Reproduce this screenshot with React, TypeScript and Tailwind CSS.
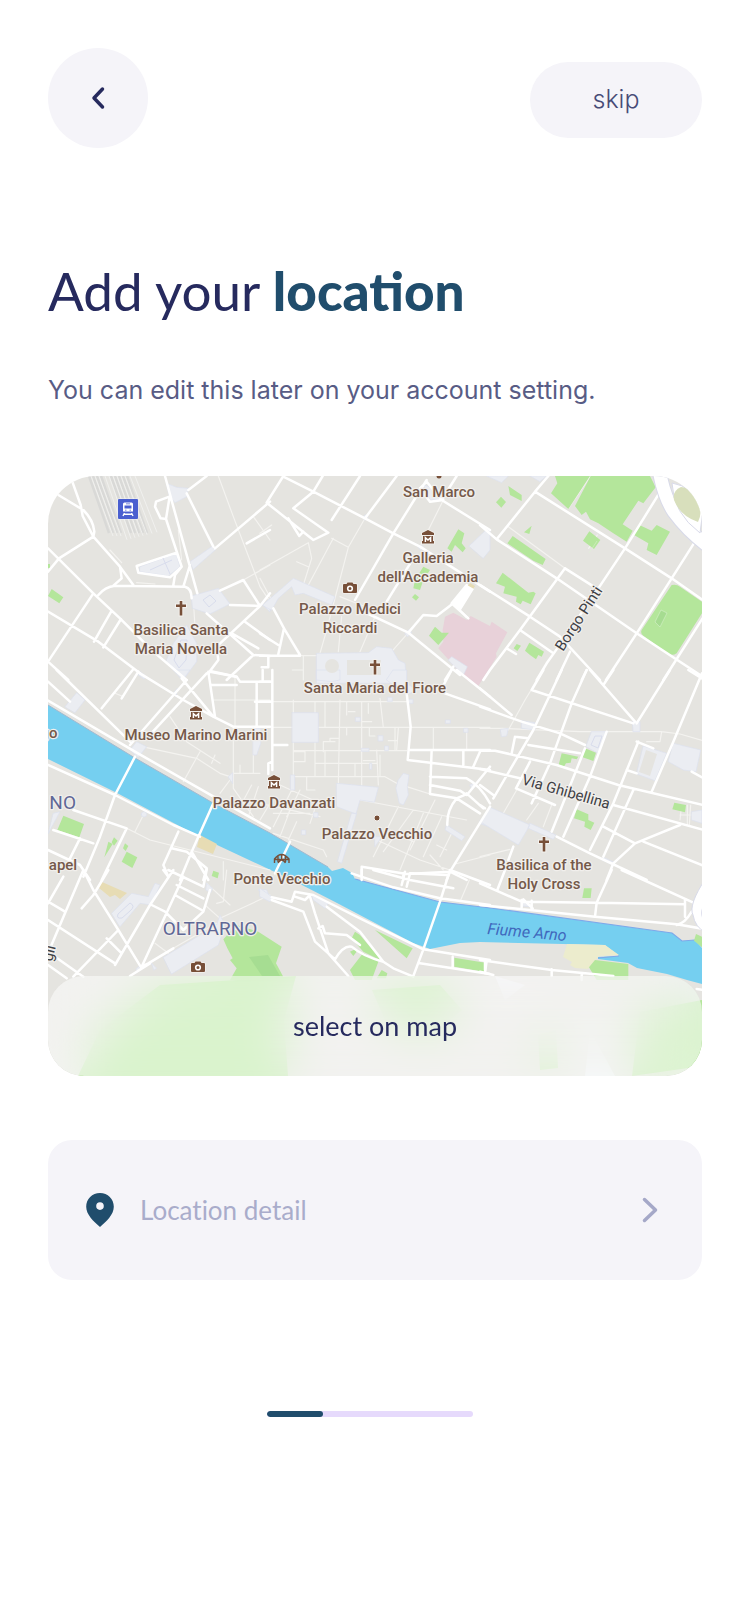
type Tile = {
  x: number;
  y: number;
  plazas: string;
  parks: string;
  major: string;
  minor: string;
};

/* Each tile is drawn on its own grid at three units per map pixel. */
const tiles: Tile[] = [
  {
    x: 40,
    y: 470,
    plazas:
      "M380 40L410 52L445 55L440 80L405 98L388 78ZM450 275L515 230L528 238L460 298ZM455 378L535 355L570 402L510 432L458 415ZM400 520L440 465L470 520L470 575L430 628L378 575ZM300 290L408 250L420 290L385 318L300 305ZM670 405L690 385V425Z",
    parks: "M35 357L70 382L58 400L24 378ZM24 282h6v12h-6Z",
    major:
      "M98 38L122 105L128 138L160 200L240 290L280 345M55 75L130 120Q160 150 163 185L160 200L57 265L24 305M24 235L160 370L240 445L340 545L440 630M24 425L175 515L300 610M160 370L24 575L85 630M175 375Q195 350 225 347L435 350Q455 355 455 385M240 290L245 325L220 347M215 422L162 515M243 447L190 532M375 18L400 110L472 370M445 60L500 18M440 70L520 230M525 235L690 95M388 80L348 95L345 110L362 145L378 147L388 85M378 147L425 290L405 315L400 345M450 285L430 350M290 288L410 248L425 290L390 322L295 308ZM540 362L610 330L660 408L570 405M660 408L690 370M660 408L530 530L535 570L505 610M500 430L640 555L690 558M640 555L560 630M615 455L690 510M575 490L655 535M510 603L590 620M620 220L690 180",
    minor:
      "M535 18L580 140L660 350L690 395M640 140L690 210M610 330L690 285M460 390L465 470M210 240L245 278M415 180L425 270M290 338L345 342",
  },
  {
    x: 260,
    y: 470,
    plazas:
      "M8 405L100 325L225 380L215 405L130 370L105 375L95 350L55 385L35 420ZM170 550L325 548L350 530L395 535L415 570L435 580L440 640H170ZM627 228L680 178L690 180V240L670 265ZM565 570L575 560L622 590L610 615ZM435 490L448 478L455 488L443 500ZM490 45L545 60L550 90L510 90ZM308 142l8 -8l8 8l-8 8ZM475 232l8 -8l8 8l-8 8Z",
    parks:
      "M595 178L613 190L605 220L617 235L608 247L585 225L575 245L562 235ZM490 290L510 300L490 330L480 360L460 355L465 330ZM465 372L477 382L468 392L456 382ZM525 470L545 488L567 488L535 525L507 497Z",
    major:
      "M70 18L20 98L160 210L205 188L100 115L160 65L188 18M85 145L118 198L130 185M70 20L160 65L315 145L400 190L480 230L550 275L690 365M300 18L215 150M410 18L315 145M500 30L400 190L285 390M590 18L545 90M460 265L380 395M480 55L500 35L545 90L690 180M480 55L510 95L550 90M300 420L445 488L600 615M445 488L490 435L530 438L580 400M0 490L55 525M40 415L72 475L55 552M72 475L120 555M0 557H120M25 557V592H5M580 590L555 630M575 400L620 345M575 400L625 445",
    minor:
      "M215 205L265 232L200 480L180 550M265 232L315 145M220 205L145 345M0 300L145 218L155 265L130 345M110 275L145 290M0 325L40 400M0 190L35 165M240 380L340 420M120 557H175M345 440L300 545M97 600H130M445 488L395 545M130 557V630M245 440L235 545M550 90L480 230",
  },
  {
    x: 480,
    y: 470,
    plazas: "M20 18L65 38L85 18ZM150 18L180 35L200 18Z",
    parks:
      "M225 18H330L265 117L213 70L232 40ZM332 18H510L527 52L490 100L475 92L428 163L458 182L440 215L400 190L355 160L330 148L318 125L305 135L285 108ZM478 165L515 182L530 165L570 185L530 255L500 240L505 220L462 195ZM85 48L125 75V93L90 75ZM63 80L78 96L64 113L48 97ZM155 167L148 192L132 187ZM98 198L197 267L188 285L160 272L82 220ZM328 184L361 210L342 237L309 212ZM68 308L145 368L160 365L167 370L152 403L128 392L122 403L108 395L110 380L70 370L75 350L48 340ZM575 345Q590 342 600 350L666 395V430L590 550Q575 560 560 548L490 497Q480 490 485 480ZM148 518L192 545L185 560L175 555L168 568L150 555L135 542ZM110 522L123 527L112 543L101 535Z",
    major:
      "M205 18L165 65L50 208M165 65L435 235L575 325L690 405M0 165L50 208L230 325L470 490L680 628M0 345L150 440L240 500L360 630M550 50L435 235L355 355L225 545L200 580L170 630M255 295L120 480L30 600L10 630M255 295L345 352M120 480L220 550M80 535L108 552M645 215L575 325L470 490L378 630M690 410L550 630M270 545L230 630M320 600L305 630",
    minor: "M85 170L255 295M330 20L265 115M326 235L352 195",
  },
  {
    x: 40,
    y: 670,
    plazas:
      "M75 110L110 68L135 90L105 128ZM270 240L290 215L320 230L295 262ZM400 0H450L428 30ZM640 175H662V220L650 255H640ZM565 320L578 308V340ZM300 5L320 20L312 27L295 15ZM40 430L60 425L25 490ZM304 433a8 8 0 1 0 16 0a8 8 0 1 0 -16 0ZM400 70L412 55L408 80Z",
    parks:
      "M70 437L132 462L118 502L52 480ZM205 515L218 522L193 562ZM222 502L233 512L222 527L215 517ZM255 520L265 528L257 543L249 535ZM260 545L292 562L277 594L245 575ZM520 602L537 608L533 625L515 618Z",
    major:
      "M50 0L270 215M24 35L90 95M24 92L285 245L530 385L690 475M278 0L185 115M245 85L295 5M300 10L430 90L520 140L580 170H690M425 25L520 140M440 30L270 225M500 10L320 205M505 5L525 140M510 5L590 20L600 35H690M515 45H590M650 40V170M668 0V30M645 95H690M24 285L225 375L400 465L480 500M285 260L225 375L180 500L130 620M520 400L455 545L420 630M100 420L260 475L185 630M40 480L160 520M120 505L90 565M24 540L120 585L150 630M415 485L370 585L385 620M395 535L440 545L500 595M455 545L505 630M500 595L490 630",
    minor:
      "M320 233L470 265L540 310L570 320M480 245L430 335M390 140L440 215L540 280M525 255L515 280M570 330L540 370M580 170V355L640 440M580 310H660M520 90H690M585 20V170M640 170V310M600 285V310M260 475L330 510L690 600M310 435L285 485M550 575V630M625 440L655 350M225 70L250 80M600 410L635 345M660 450L690 400",
  },
  {
    x: 260,
    y: 670,
    plazas:
      "M97 128H175V217H97ZM230 340L355 352L343 397L300 390L288 432L230 410ZM275 430H290L245 580L233 575ZM415 330L430 310L447 315L442 350L445 375L430 405L418 400L408 355ZM170 0H240V30L215 35L170 30ZM400 0H440V40L470 60L440 75L380 30ZM287 142h14v12h-14ZM355 197h14v16h-14ZM305 235h22v9h-22ZM445 88h14v12h-14ZM375 228h10v14h-10ZM557 150h14v10h-14ZM612 175h12v12h-12ZM125 480h12v14h-12ZM162 428h12v14h-12ZM330 280h5v18h-5ZM92 315h12v45h-12ZM383 82h14v12h-14ZM560 465L615 500L605 512L556 480ZM660 460L690 410V470ZM630 345L645 338L650 345L637 358ZM345 500L365 500L345 530Z",
    parks: "",
    major:
      "M0 35H37M0 95H37M37 0V300M37 275L25 280V312M40 225H82M440 70L452 170L443 270M450 240H690M443 270L690 300M515 240L510 370M510 320L620 325Q660 345 690 400M510 345L600 362L620 375M510 372L590 385L625 370L690 290M610 240V285M660 245L640 290M590 385Q560 420 562 465M590 385L660 430M620 370L670 415M690 410L570 605L560 630M305 590V630M305 590L440 612L570 605L620 630M430 610V630M540 65L575 0M540 65L690 118M590 0L690 80M90 515L45 610",
    minor:
      "M37 172H690M100 90V340M165 95V320M240 90L235 345M305 95V345M37 95H440M100 242H440M100 320H375L410 340M165 280H350M195 95V172M360 85L370 172M260 95V135M265 125H285M325 100V130M305 155H335M405 172V240M415 175L410 240M385 212H410M520 172V240M620 175V240M350 240L355 345M285 280V320M100 245H135V275H100M190 245V215H225M210 215V205H235M328 172V198H345M100 350L40 470M140 320V360H165M60 345L180 400M0 400L180 440M100 395L60 500M170 400L150 460M40 490L190 540L200 560M300 390L620 450M415 410L340 560M490 430L420 600M440 350L510 372M390 480L460 515M330 500L480 570L570 600M585 582L690 555M525 390L450 540M545 440L490 560M575 490L540 560M530 525L560 540M260 172V195M310 272H345M360 255V320M195 245V320M120 360L80 440M40 430H150M110 455L85 510M460 420L370 545M510 555L550 600",
  },
  {
    x: 480,
    y: 670,
    plazas:
      "M30 412L150 465L115 525L0 455ZM150 460L228 495L220 508L145 475ZM125 152L165 158V180L125 175ZM62 178L85 175L80 198L65 200ZM335 185H383L355 250L318 230ZM458 155H480V185H460ZM490 228L560 250L525 332L470 312ZM580 220L662 240L648 305L610 300L565 275ZM635 425L666 420V460L635 450ZM370 562L405 578L400 585L366 570Z",
    parks:
      "M245 250L295 260L290 268L275 265L272 278L258 280L250 293L235 288ZM315 235L348 248L340 273L308 262ZM290 418L325 433V450L343 458L332 480L313 470L315 455L282 445ZM583 398L618 405L615 427L577 418Z",
    major:
      "M190 0L155 60L460 160M245 0L160 180L40 385M320 0L275 100L210 280L155 400M380 185L330 320L250 500M315 235L215 485M475 215L400 400L330 540M570 0L470 160M330 0L465 155M400 0L372 42M666 10L580 215L515 365M460 360L370 560M625 0L666 25M0 55L95 135M0 110L125 155L240 190L315 225M0 242H45L230 285L415 345L690 410M105 200L95 250M105 200L145 205M145 225L300 250M0 297L120 325M150 275L108 355L225 405M0 345L40 375M0 405L15 415M400 405L690 485M370 470L465 520L600 465M465 520L400 580L380 630M490 515L690 595M230 500L330 550L500 630M470 215L520 235M440 300L470 310M635 305L690 335M100 530L85 570",
    minor:
      "M0 175H65L300 185H380L545 185L600 192L690 218M190 0L135 90L85 180M0 560L90 538M110 360L70 430M175 400L140 450M215 405L190 470M545 185L540 215H500M605 405L600 450M622 405V465M632 405L628 465M600 435H640",
  },
  {
    x: 40,
    y: 870,
    plazas:
      "M215 130L275 70L325 80L345 40L360 45L335 105L300 100L240 170ZM370 262L530 165L540 135L555 165L535 225L395 312ZM655 60L690 85L680 60ZM500 40L518 55L512 68L498 60ZM288 297L296 290L303 297L295 305ZM335 280L350 295L342 300Z",
    parks:
      "M550 208L590 165L655 185L725 230L708 280L735 330H570L590 295L570 270L578 265L562 235Z",
    major:
      "M24 95L75 125M70 20L24 100M130 0L45 200L24 250M130 0L160 60L235 180L305 295M24 150L225 280M205 0L160 75L125 115M235 180L100 320M200 205L245 250M400 0L330 105L225 285M430 20L305 290M335 105L375 125L430 180M410 45L490 85M405 75L485 120M490 50L385 0M500 0L490 50M510 60L490 125L430 180M305 290L325 280L400 235M24 245L130 320M24 285L80 325M270 318L330 280M370 0L385 20",
    minor:
      "M345 220L385 250M495 105L540 145L690 75M500 40L570 105M560 0L550 95L530 100M400 235L530 160",
  },
  {
    x: 260,
    y: 870,
    plazas: "M155 75L205 100L195 115L160 90ZM0 55L38 82L30 95L0 80Z",
    parks:
      "M345 180L458 235L440 265ZM285 185L300 195L365 272L310 245L275 205ZM310 248L355 275L335 330H285L270 300ZM270 245L285 238L290 245L280 258ZM583 263L675 278L672 305L583 290ZM365 300L382 310L378 325H350Z",
    major:
      "M35 90L130 125L165 215L205 250L265 318M35 82L95 95L105 65L160 75L300 145L490 238L690 270M105 80L135 90L150 75M200 110L300 185L370 275M150 80L165 130L205 250M175 175L188 168L195 190L260 195L300 225M225 268Q250 225 275 230Q310 260 370 275L400 295L460 320M205 250L225 268M570 0L540 95L490 238L460 318M480 280L690 312M578 260V290M675 270V300M275 10L400 52L540 85L690 105M305 0V20M425 45L435 5M440 50L450 10L560 15M340 0L450 30L580 55M570 0L690 45",
    minor: "M628 30L600 95",
  },
  {
    x: 480,
    y: 870,
    plazas: "M125 95L140 95L150 110L125 108Z",
    parks:
      "M312 55H335L332 84H307ZM345 270L445 282V330H350L327 292ZM648 192L666 200V232L642 212ZM0 278H12V303H0Z",
    major:
      "M0 40L125 95L350 98L615 103M75 0L52 60M395 0L350 98L345 140M425 0L640 98M0 105L345 140L590 163L690 180M125 90V112M130 88L158 115M155 92V117M615 90V140M590 165Q615 160 635 125M0 270L215 300L400 318M20 272L15 310M215 298V318M0 305L40 315M305 310V330M650 357L690 362",
    minor: "",
  },
];

const layers = [
  { key: "minor", fill: "none", stroke: "#f4f3f0", width: 3.5 },
  { key: "plazas", fill: "#ebedf2", stroke: "#dde1ef", width: 2 },
  { key: "parks", fill: "#b4e69b", stroke: "none", width: 0 },
  { key: "major", fill: "none", stroke: "#ffffff", width: 7.5 },
] as const;

const labels: [string, number, number][] = [
  ["San Marco", 439, 497],
  ["Galleria", 428, 563],
  ["dell'Accademia", 428, 582],
  ["Palazzo Medici", 350, 614],
  ["Riccardi", 350, 633],
  ["Basilica Santa", 181, 635],
  ["Maria Novella", 181, 654],
  ["Santa Maria del Fiore", 375, 693],
  ["Museo Marino Marini", 196, 740],
  ["Palazzo Davanzati", 274, 808],
  ["Palazzo Vecchio", 377, 839],
  ["Ponte Vecchio", 282, 884],
  ["Basilica of the", 544, 870],
  ["Holy Cross", 544, 889],
  ["go", 49, 738],
  ["apel", 63, 870],
];

const crosses = [
  [181, 608],
  [375, 667],
  [544, 844],
];
const museums = [
  [428, 537],
  [196, 713],
  [274, 782],
];
const cameras = [
  [350, 588],
  [198, 967],
];

function Pois() {
  return (
    <g>
      {crosses.map(([x, y]) => (
        <path
          key={`${x}-${y}`}
          transform={`translate(${x} ${y})`}
          d="M-1.3 -7H1.3V-3.4H5V-0.9H1.3V7.5H-1.3V-0.9H-5V-3.4H-1.3Z"
          fill="#774f38"
          stroke="#f3f1ee"
          strokeWidth="2"
          paintOrder="stroke"
        />
      ))}
      {museums.map(([x, y]) => (
        <g key={`${x}-${y}`} transform={`translate(${x} ${y})`}>
          <path
            d="M0 -7L6 -4V-2H-6V-4ZM-5 -1H5V4H6V6.500H-6V4H-5Z"
            fill="#774f38"
            stroke="#f3f1ee"
            strokeWidth="1.500"
            paintOrder="stroke"
          />
          <path d="M-2.600 5V0.600L0 3L2.600 0.600V5" fill="none" stroke="#fff" strokeWidth="1.500" />
        </g>
      ))}
      {cameras.map(([x, y]) => (
        <g key={`${x}-${y}`} transform={`translate(${x} ${y})`}>
          <path
            d="M-6 -4H-3.500L-2.500 -5.500H2.500L3.500 -4H6Q7 -4 7 -3V4Q7 5 6 5H-6Q-7 5 -7 4V-3Q-7 -4 -6 -4Z"
            fill="#774f38"
            stroke="#f3f1ee"
            strokeWidth="1.500"
            paintOrder="stroke"
          />
          <circle cy="0.500" r="2.300" fill="none" stroke="#fff" strokeWidth="1.600" />
        </g>
      ))}
      <circle cx="377" cy="818" r="3" fill="#774f38" stroke="#f3f1ee" strokeWidth="1" />
      <path
        d="M274.500 863V859Q281.500 850 289 859V863M278 862V856M281.700 859V855M285.500 862V856M274.500 859.500H289M278 863Q281.700 857 285.500 863"
        fill="none"
        stroke="#774f38"
        strokeWidth="1.400"
      />
      <g transform="translate(118 499)">
        <rect x="-0.500" y="-0.500" width="21" height="21" rx="1.500" fill="#f1f1f5" />
        <rect width="20" height="20" rx="1" fill="#4a5fd0" />
        <path d="M6.500 3.500H13.500Q15 3.500 15 5V12.500H5V5Q5 3.500 6.500 3.500Z" fill="#fff" />
        <path d="M6.500 6.500H13.500V9.500H6.500ZM7 10.700H8.500V11.500H7ZM11.500 10.700H13V11.500H11.500ZM8 4.500H12V5.300H8Z" fill="#4a5fd0" />
        <path d="M6.500 14L5 17M13.500 14L15 17M6 15.300H14" stroke="#fff" strokeWidth="1.400" fill="none" />
      </g>
    </g>
  );
}

function CityMap() {
  return (
    <svg
      viewBox="48 476 654 600"
      preserveAspectRatio="xMidYMid slice"
      className="block h-[600px] w-full font-[Roboto,sans-serif]"
      role="img"
      aria-label="Map of Florence"
    >
      <rect x="48" y="476" width="654" height="600" fill="#e5e4e0" />

      {/* railway yard */}
      <g fill="none" strokeWidth="2.500">
        {[1, 5, 9, 13, 23, 27, 31, 35, 39].map((d) => (
          <path key={d} d={`M${88 + d} 476l20 57`} stroke="#d9d9d7" />
        ))}
        {[3, 7, 11, 17, 21, 25, 29, 33, 37, 42, 47].map((d) => (
          <path key={d} d={`M${88 + d} 476l22 ${d > 12 ? 68 - d / 4 : 60}`} stroke="#f0f0ee" strokeWidth="1" />
        ))}
      </g>

      <path
        transform="translate(260 470) scale(.33333)"
        d="M555 440L580 428L620 450L632 438L690 468L695 455L742 487L708 550L710 560L655 648L620 630L535 535L550 515L548 480Z"
        fill="#e8d1d9"
      />

      <path
        d="M48 705L135 758L213 803L270 833L328 867L332 871L343 868L352 873L355 879L440 902L490 908L672 933L682 941L695 940L702 948V984L687 980L667 974L637 968L628 963L598 959V957L619 956L605 945L563 944L480 942L460 943L430 949L413 943L337 903L300 884L260 865L200 837L117 793L48 759Z"
        fill="#75cff0"
      />
      <path
        d="M355 879L440 902L490 908L672 933L682 941L695 940M598 958L619 956"
        fill="none"
        stroke="#7ea9ea"
        strokeWidth="1.200"
      />
      <path d="M48 705L135 758L213 803L270 833L328 867" fill="none" stroke="#a3b9cf" strokeWidth="1" />

      <path
        d="M567 944L605 945L619 955L599 956L588 969L575 968L570 965L572 962L563 957Z"
        fill="#ececcd"
      />
      <path
        d="M200 835L217 844L213 854L197 847ZM102 882L127 893L120 899L115 895L110 897L99 888ZM470 583L475 586L472 591L466 588Z"
        fill="#e7dcb4"
      />

      {layers.map((layer) => (
        <g
          key={layer.key}
          fill={layer.fill}
          stroke={layer.stroke}
          strokeWidth={layer.width}
          strokeLinejoin="round"
          strokeLinecap="round"
        >
          {tiles.map((tile) => (
            <path
              key={`${tile.x}-${tile.y}`}
              transform={`translate(${tile.x} ${tile.y}) scale(.33333)`}
              d={tile[layer.key]}
            />
          ))}
        </g>
      ))}

      {/* building outlines inside the squares */}
      <path d="M347 660H381V675H347ZM646 750L657 754L650 776L639 772Z" fill="#e5e4e0" />
      <circle cx="332" cy="666" r="7" fill="#e5e4e0" />
      <path
        d="M595 736H602L598 748L591 745ZM118 914L130 903Q136 906 130 911L122 918Q116 919 118 914ZM174 660L181 640L187 640L186 660L179 668ZM203 600L210 595L216 601L209 607ZM150 570L172 560M163 558L170 574"
        fill="none"
        stroke="#d8dcec"
        strokeWidth="1"
      />
      <path d="M452 603L467 585L474 589L461 610L469 618L466 618Z" fill="#fff" />
      <path d="M661 610L667 613L660 627L655 622ZM597 541L589 553" fill="#a6dc91" stroke="#dff2d4" strokeWidth="0.500" />
      <path d="M249 957L268 955L280 976H262Z" fill="#a6dd92" />

      {/* ring road */}
      <path d="M659 470Q664 497 674 512Q688 531 707 545" fill="none" stroke="#d8dae9" strokeWidth="15" />
      <path d="M659 470Q664 497 674 512Q688 531 707 545" fill="none" stroke="#fff" strokeWidth="13" />
      <path d="M672 483Q693 486 703 510L700 533Q673 513 672 483Z" fill="#fff" stroke="#d8dae9" strokeWidth="1" />
      <path d="M681 487Q672 491 674 500Q680 516 698 522Q705 508 693 493Q687 487 681 487Z" fill="#d8dfbc" />
      <path d="M706 878Q688 905 693 915Q695 927 706 933Z" fill="#fff" stroke="#d8dae9" strokeWidth="1" />
      <ellipse cx="704" cy="913" rx="3" ry="6" fill="#e0e1ef" />

      {/* gardens south of the river */}
      <path d="M140 1000L160 985L296 976L284 1020L288 1076H78L100 1030Z" fill="#b4e69b" />
      <path d="M372 990L440 985L462 1010L430 1036L385 1020ZM538 1035L556 1030L558 1068L540 1070ZM640 1012L702 1000V1066L632 1076Z" fill="#b4e69b" />
      <path d="M495 976L525 985L505 1000ZM590 1030L615 1076H585Z" fill="#f2f4fb" />

      <Pois />
      <circle cx="439" cy="476" r="2.500" fill="#774f38" />

      <g
        fontSize="15"
        fontWeight="500"
        fill="#75594a"
        textAnchor="middle"
        stroke="#f1efec"
        strokeWidth="2.500"
        strokeLinejoin="round"
        paintOrder="stroke"
      >
        {labels.map(([text, x, y]) => (
          <text key={text} x={x} y={y}>
            {text}
          </text>
        ))}
        <g fill="#5f6896" fontSize="19" fontWeight="400">
          <text x="210" y="935">
            OLTRARNO
          </text>
          <text x="76" y="809" textAnchor="end">
            NO
          </text>
        </g>
        <g fill="#3f4145" fontWeight="400" textAnchor="start">
          <text transform="translate(563 652) rotate(-57)">Borgo Pinti</text>
          <text transform="translate(521 784) rotate(16)">Via Ghibellina</text>
          <text transform="translate(52 962) rotate(-76)">gli</text>
        </g>
      </g>
      <text
        transform="translate(487 934) rotate(5)"
        fontSize="16"
        fontStyle="italic"
        fill="#4068bd"
      >
        Fiume Arno
      </text>
    </svg>
  );
}

export default function App() {
  return (
    <main className="min-h-screen bg-white px-12 pt-12 pb-16 font-[Lato,sans-serif] text-[#262a5e]">
      <header className="flex items-start justify-between">
        <button
          type="button"
          aria-label="Back"
          className="flex size-[100px] items-center justify-center rounded-full bg-[#f5f4f9]"
        >
          <svg width="16" height="24" viewBox="0 0 16 24" fill="none" aria-hidden="true">
            <path
              d="M12.500 3L4 12L12.500 21"
              stroke="#262a5e"
              strokeWidth="3.500"
              strokeLinecap="round"
              strokeLinejoin="round"
            />
          </svg>
        </button>
        <button
          type="button"
          className="mt-3.5 h-[76px] w-[172px] rounded-full bg-[#f5f4f9] font-[Inter,sans-serif] text-[25px] font-light text-[#474b77]"
        >
          skip
        </button>
      </header>

      <h1 className="mt-[109px] text-[53px] leading-[68px]">
        Add your <strong className="font-black text-[#204d6c]">location</strong>
      </h1>
      <p className="mt-[47px] font-[Inter,sans-serif] text-[25px] leading-9 text-[#585c85] [font-variant-ligatures:none]">
        You can edit this later on your account setting.
      </p>

      <section className="relative mt-[68px] overflow-hidden rounded-t-[48px] rounded-b-[36px]">
        <CityMap />
        <button
          type="button"
          className="absolute inset-x-0 bottom-0 h-[100px] rounded-[36px] bg-white/50 text-[27px] backdrop-blur-xl"
        >
          select on map
        </button>
      </section>

      <div className="mt-16 flex h-[140px] items-center rounded-3xl bg-[#f5f4f9] pr-[44px] pl-[38px]">
        <svg width="28" height="34" viewBox="0 0 28 34" className="shrink-0" aria-hidden="true">
          <path
            fillRule="evenodd"
            d="M14 0C6.200 0 0.200 6 0.200 13.800C0.200 21.500 7.500 28.500 14 34C20.500 28.500 27.800 21.500 27.800 13.800C27.800 6 21.800 0 14 0ZM14 9.300A3.800 3.800 0 1 1 14 16.900A3.800 3.800 0 1 1 14 9.300Z"
            fill="#204d6c"
          />
        </svg>
        <input
          type="text"
          aria-label="Location detail"
          placeholder="Location detail"
          className="ml-[26px] min-w-0 flex-1 bg-transparent text-[26px] text-[#262a5e] outline-none [font-variant-ligatures:none] placeholder:text-[#a9accb]"
        />
        <button type="button" aria-label="Open location detail">
          <svg width="16" height="26" viewBox="0 0 16 26" fill="none" aria-hidden="true">
            <path
              d="M2.500 2.500L13.500 13L2.500 23.500"
              stroke="#a5a8c8"
              strokeWidth="3.500"
              strokeLinecap="round"
              strokeLinejoin="round"
            />
          </svg>
        </button>
      </div>

      <div className="mt-[131px] flex justify-center pr-2.5">
        <div
          role="progressbar"
          aria-label="Setup progress"
          aria-valuenow={27}
          aria-valuemin={0}
          aria-valuemax={100}
          className="h-1.5 w-[206px] overflow-hidden rounded-full bg-[#e6dafc]"
        >
          <div className="h-full w-[27%] rounded-full bg-[#204d6c]" />
        </div>
      </div>
    </main>
  );
}
